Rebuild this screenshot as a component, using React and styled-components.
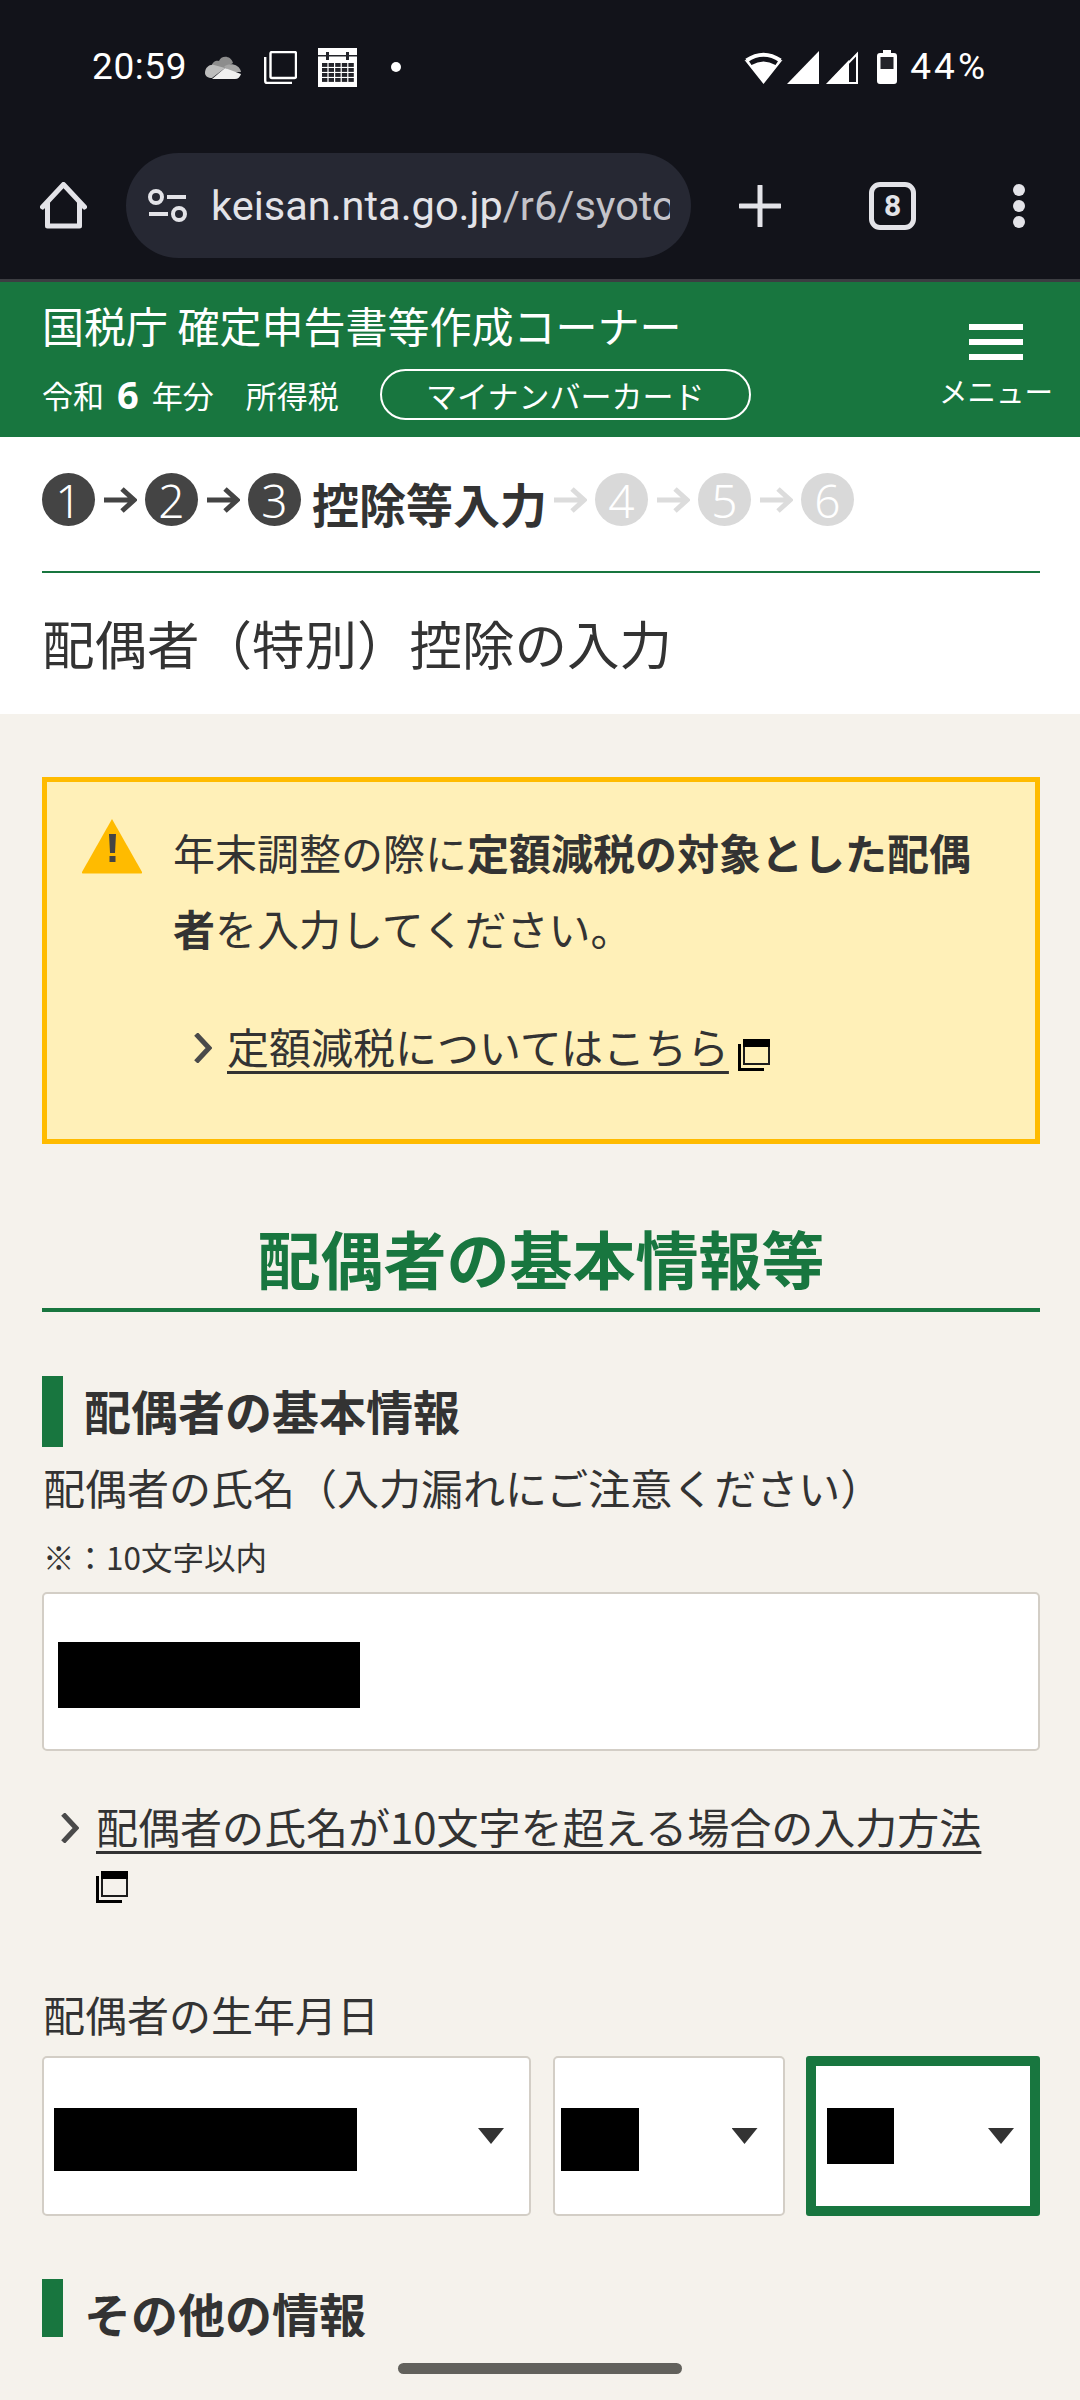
import styled, { createGlobalStyle } from "styled-components"

const GREEN = "#18763f"
const INK = "#333333"

const GlobalStyle = createGlobalStyle`
  html, body { margin: 0; padding: 0; }
  body {
    background: #f5f2ec;
    font-family: "Noto Sans CJK JP", "Noto Sans", sans-serif;
    color: ${INK};
  }
  * { box-sizing: border-box; }
`

const Screen = styled.div`
  width: 1080px;
  height: 2400px;
  display: flex;
  flex-direction: column;
  overflow: hidden;
  background: #f5f2ec;
`

/* browser chrome */
const Chrome = styled.div`
  background: #12131a;
  border-bottom: 3px solid #3c3d42;
  flex: none;
`

const StatusBar = styled.div`
  height: 134px;
  padding: 0 92px 0 92px;
  display: flex;
  align-items: center;
  justify-content: space-between;
  color: #fff;
  font-family: Roboto, sans-serif;
  font-size: 37px;
`

const StatusGroup = styled.div`
  display: flex;
  align-items: center;
`

const StatusText = styled.span`
  letter-spacing: ${(p) => p.$spacing || 0}px;
  line-height: 40px;
  margin-left: ${(p) => p.$left || 0}px;
`

const Glyph = styled.svg`
  display: block;
  flex: none;
  margin-left: ${(p) => p.$left || 0}px;
  margin-right: ${(p) => p.$right || 0}px;
  margin-top: ${(p) => p.$top || 0}px;
`

const Toolbar = styled.div`
  height: 145px;
  padding: 0 0 2px 40px;
  display: flex;
  align-items: center;
`

const UrlPill = styled.div`
  width: 565px;
  height: 105px;
  margin-left: 39px;
  padding-left: 22px;
  border-radius: 53px;
  background: #262833;
  display: flex;
  align-items: center;
`

const UrlText = styled.div`
  width: 459px;
  margin-left: 24px;
  overflow: hidden;
  white-space: nowrap;
  font-family: Roboto, sans-serif;
  font-size: 41.5px;
  line-height: 54px;
  color: #e3e3e8;
`

const UrlPath = styled.span`
  color: #c4c4ca;
`

const TabCount = styled.div`
  width: 47px;
  height: 48px;
  margin-left: 88px;
  border: 5px solid #e3e3e8;
  border-radius: 11px;
  display: flex;
  align-items: center;
  justify-content: center;
  color: #e3e3e8;
  font-family: Roboto, sans-serif;
  font-size: 30px;
  font-weight: 700;
  line-height: 1;
`

/* site header */
const SiteHeader = styled.header`
  height: 155px;
  flex: none;
  background: ${GREEN};
  color: #fff;
  display: flex;
  justify-content: space-between;
`

const HeaderLeft = styled.div`
  padding: 14px 0 0 42px;
`

const SiteTitle = styled.div`
  font-size: 42px;
  line-height: 58px;
  white-space: nowrap;
`

const SiteMeta = styled.div`
  margin-top: 15px;
  display: flex;
  align-items: center;
  font-size: 31px;
  line-height: 51px;
  white-space: nowrap;
`

const YearNumber = styled.b`
  font-family: "Noto Sans", sans-serif;
  font-size: 38px;
  margin: 0 13px;
  font-weight: 700;
`

const TaxName = styled.span`
  margin-left: 32px;
`

const CardPill = styled.div`
  width: 371px;
  height: 51px;
  margin-left: 41px;
  border: 2px solid #fff;
  border-radius: 26px;
  display: flex;
  align-items: center;
  justify-content: center;
  font-size: 31px;
  line-height: 1;
`

const MenuButton = styled.div`
  width: 112px;
  margin-right: 28px;
  padding-top: 42px;
  display: flex;
  flex-direction: column;
  align-items: center;
`

const MenuBar = styled.span`
  width: 54px;
  height: 6px;
  margin-bottom: 9px;
  background: #fff;
`

const MenuLabel = styled.span`
  margin-top: 2px;
  font-size: 28.5px;
  line-height: 40px;
  white-space: nowrap;
`

/* steps and page title */
const TitleBlock = styled.section`
  height: 277px;
  flex: none;
  background: #fff;
  padding: 36px 40px 0 42px;
`

const Steps = styled.div`
  height: 53px;
  display: flex;
  align-items: center;
`

const StepCircle = styled.span`
  width: 53px;
  height: 53px;
  border-radius: 50%;
  flex: none;
  background: ${(p) => (p.$done ? "#444444" : "#d9d9d9")};
  color: #fff;
  display: flex;
  align-items: center;
  justify-content: center;
  font-family: "Noto Sans", sans-serif;
  font-size: 46px;
  font-weight: 300;
  line-height: 1;
`

const StepName = styled.b`
  margin: 6px -2px 0 11px;
  font-size: 47px;
  line-height: 53px;
  font-weight: 700;
  white-space: nowrap;
`

const Divider = styled.div`
  height: 2px;
  margin-top: 45px;
  background: ${GREEN};
`

const PageTitle = styled.h1`
  margin: 38px 0 0 0;
  font-size: 52.5px;
  line-height: 62px;
  font-weight: 400;
  white-space: nowrap;
`

/* form */
const Main = styled.main`
  height: 1623px;
  flex: none;
  overflow: hidden;
  padding: 63px 40px 0 42px;
`

const Alert = styled.div`
  height: 367px;
  padding: 36px 0 0 34px;
  background: #fff0b8;
  border: 5px solid #ffbb00;
  display: flex;
  align-items: flex-start;
`

const AlertBody = styled.div`
  width: 805px;
  margin: -4px 0 0 30px;
`

const AlertText = styled.p`
  margin: 0;
  font-size: 42px;
  line-height: 76px;
`

const LinkRow = styled.div`
  display: flex;
  align-items: flex-start;
  margin: ${(p) => p.$margin};
`

const LinkText = styled.a`
  max-width: ${(p) => p.$max || 900}px;
  margin-left: ${(p) => p.$gap}px;
  color: ${INK};
  font-size: 42px;
  line-height: 60px;
  text-decoration: underline;
  text-decoration-thickness: 3px;
  text-underline-offset: 7px;
`

const LinkIcon = styled.svg`
  display: inline-block;
  vertical-align: ${(p) => p.$drop}px;
  margin-left: ${(p) => p.$left || 0}px;
`

const SectionTitle = styled.h2`
  margin: 72px 0 0 0;
  padding-bottom: 10px;
  border-bottom: 4px solid ${GREEN};
  color: ${GREEN};
  text-align: center;
  font-size: 63px;
  line-height: 82px;
  font-weight: 700;
`

const SubTitle = styled.h3`
  height: 71px;
  margin: ${(p) => p.$top}px 0 0 0;
  padding-left: 21px;
  border-left: 21px solid ${GREEN};
  font-size: 47px;
  line-height: 67px;
  font-weight: 700;
`

const FieldLabel = styled.div`
  margin-top: ${(p) => p.$top}px;
  padding-left: 1px;
  font-size: 42px;
  line-height: 60px;
  white-space: nowrap;
`

const Note = styled.div`
  margin-top: 17px;
  padding-left: 1px;
  font-size: 31.5px;
  line-height: 44px;
`

const TextField = styled.div`
  height: 159px;
  margin-top: 14px;
  padding-left: 14px;
  background: #fff;
  border: 2px solid #d3cec6;
  border-radius: 5px;
  display: flex;
  align-items: center;
`

const Redacted = styled.span`
  width: ${(p) => p.$w}px;
  height: ${(p) => p.$h}px;
  margin-top: ${(p) => p.$top}px;
  flex: none;
  background: #000;
`

const DateRow = styled.div`
  margin-top: 12px;
  display: grid;
  grid-template-columns: 489px 232px 234px;
  justify-content: space-between;
`

const Select = styled.div`
  height: 160px;
  padding: 0 ${(p) => (p.$focused ? 16 : 25)}px 0 ${(p) => p.$pad}px;
  background: #fff;
  border: ${(p) => (p.$focused ? `10px solid ${GREEN}` : "2px solid #d3cec6")};
  border-radius: ${(p) => (p.$focused ? 3 : 5)}px;
  display: flex;
  align-items: center;
  justify-content: space-between;
`

const SelectArrow = styled.span`
  width: 26px;
  height: 16px;
  background: ${INK};
  clip-path: polygon(0 0, 100% 0, 50% 100%);
`

/* android gesture bar */
const NavBar = styled.div`
  flex: 1;
  padding-top: 26px;
  display: flex;
  justify-content: center;
`

const HomeIndicator = styled.div`
  width: 284px;
  height: 11px;
  border-radius: 6px;
  background: #62615c;
`

const Chevron = ({ top = 0 }) => (
  <Glyph width="19" height="30" viewBox="0 0 19 30" $top={top}>
    <path d="M3 1 L16 15 L3 29" fill="none" stroke="#4a4a4a" strokeWidth="5" />
  </Glyph>
)

const WindowIcon = ({ left, drop = -7 }) => (
  <LinkIcon width="32" height="32" viewBox="0 0 32 32" $left={left} $drop={drop}>
    <rect x="6" y="1" width="25" height="24" fill="none" stroke="#1c1c1c" strokeWidth="2" />
    <rect x="5" y="0" width="27" height="8" fill="#000" />
    <path d="M1.5 5 V30.5 H26" fill="none" stroke="#000" strokeWidth="3" />
  </LinkIcon>
)

const StepArrow = ({ light }) => (
  <Glyph width="33" height="26" viewBox="0 0 33 26" $left={9} $right={8}>
    <path d="M0 13 H30 M18 2 L30 13 L18 24" fill="none" stroke={light ? "#dcdcdc" : "#444444"} strokeWidth="5" />
  </Glyph>
)

const CalendarIcon = () => (
  <Glyph width="39" height="39" viewBox="0 0 39 39" $left={21}>
    <rect width="39" height="39" fill="#fff" />
    <rect x="0" y="7" width="39" height="1.5" fill="#23242a" />
    <rect x="8" y="4" width="3" height="8" fill="#23242a" />
    <rect x="28" y="4" width="3" height="8" fill="#23242a" />
    {[0, 1, 2, 3].map((r) =>
      [0, 1, 2, 3, 4].map((c) => (
        <rect key={`${r}-${c}`} x={4 + c * 6.6} y={15 + r * 5} width="5.4" height="3.9" fill="#23242a" />
      ))
    )}
  </Glyph>
)

function App() {
  return (
    <Screen>
      <GlobalStyle />
      <Chrome>
        <StatusBar>
          <StatusGroup>
            <StatusText $spacing={0.6}>20:59</StatusText>
            <Glyph width="36" height="24" viewBox="0 0 36 24" $left={18}>
              <path d="M6 13 C7 6 12 5 14 6 C16 0 26 0 28 8 L18 14 Z" fill="#8d8d8d" />
              <path d="M0 18 C0 12 5 9 9 10 L20 13 L7 23 C3 23 0 21 0 18 Z" fill="#bdbdbd" />
              <path d="M19 12 C23 7 35 9 36 17 L26 17 Z" fill="#a5a5a5" />
              <path d="M7 24 L20 13 L36 19 C35 22 33 24 30 24 Z" fill="#f0f0f0" />
            </Glyph>
            <Glyph width="33" height="33" viewBox="0 0 33 33" $left={23}>
              <rect x="6.5" y="1" width="25.5" height="26" rx="1.5" fill="none" stroke="#fff" strokeWidth="2.4" />
              <path d="M1.2 6 V30 Q1.2 32 3 32 H28" fill="none" stroke="#fff" strokeWidth="2.4" />
            </Glyph>
            <CalendarIcon />
            <Glyph width="10" height="10" viewBox="0 0 10 10" $left={34}>
              <circle cx="5" cy="5" r="5" fill="#fff" />
            </Glyph>
          </StatusGroup>
          <StatusGroup>
            <Glyph width="39" height="33" viewBox="0 0 39 33">
              <path d="M2.5 9.5 Q19.5 -2 36.5 9.5" fill="none" stroke="#fff" strokeWidth="4" />
              <path d="M0.5 9 L19.5 33 L38.5 9 L34.5 9.5 L31.5 14 Q19.5 7 7.5 14 L4.5 9.5 Z" fill="#fff" />
            </Glyph>
            <Glyph width="32" height="33" viewBox="0 0 32 33" $left={4}>
              <path d="M32 0 V33 H0 Z" fill="#fff" />
            </Glyph>
            <Glyph width="32" height="33" viewBox="0 0 32 33" $left={7}>
              <path d="M31 3 V32 H3 Z" fill="none" stroke="#fff" strokeWidth="2" />
              <path d="M23 9 V33 H0 Z" fill="#fff" />
            </Glyph>
            <Glyph width="20" height="34" viewBox="0 0 20 34" $left={19}>
              <path d="M6 0 H14 V3 H17 Q20 3 20 6 V31 Q20 34 17 34 H3 Q0 34 0 31 V6 Q0 3 3 3 H6 Z" fill="#fff" />
              <rect x="3.5" y="7" width="13" height="12" fill="#23242a" />
            </Glyph>
            <StatusText $spacing={3} $left={13}>44%</StatusText>
          </StatusGroup>
        </StatusBar>
        <Toolbar>
          <Glyph width="47" height="47" viewBox="0 0 47 47">
            <path d="M2.5 25 L23.5 2.5 L44.5 25" fill="none" stroke="#e3e3e8" strokeWidth="5" strokeLinecap="round" strokeLinejoin="round" />
            <path d="M7.5 20 V44 H39.5 V20" fill="none" stroke="#e3e3e8" strokeWidth="5" strokeLinejoin="round" />
          </Glyph>
          <UrlPill>
            <Glyph width="39" height="33" viewBox="0 0 39 33">
              <circle cx="8" cy="8" r="6" fill="none" stroke="#e3e3e8" strokeWidth="4" />
              <circle cx="31" cy="25" r="6" fill="none" stroke="#e3e3e8" strokeWidth="4" />
              <path d="M19 8 H38 M1 25 H20" stroke="#e3e3e8" strokeWidth="4" />
            </Glyph>
            <UrlText>keisan.nta.go.jp<UrlPath>/r6/syotoku</UrlPath></UrlText>
          </UrlPill>
          <Glyph width="42" height="42" viewBox="0 0 42 42" $left={48}>
            <path d="M21 1 V41 M1 21 H41" stroke="#e3e3e8" strokeWidth="5" strokeLinecap="round" />
          </Glyph>
          <TabCount>8</TabCount>
          <Glyph width="14" height="46" viewBox="0 0 14 46" $left={96}>
            <circle cx="7" cy="7" r="6" fill="#e3e3e8" />
            <circle cx="7" cy="23" r="6" fill="#e3e3e8" />
            <circle cx="7" cy="39" r="6" fill="#e3e3e8" />
          </Glyph>
        </Toolbar>
      </Chrome>

      <SiteHeader>
        <HeaderLeft>
          <SiteTitle>国税庁 確定申告書等作成コーナー</SiteTitle>
          <SiteMeta>
            令和<YearNumber>6</YearNumber>年分
            <TaxName>所得税</TaxName>
            <CardPill>マイナンバーカード</CardPill>
          </SiteMeta>
        </HeaderLeft>
        <MenuButton>
          <MenuBar />
          <MenuBar />
          <MenuBar />
          <MenuLabel>メニュー</MenuLabel>
        </MenuButton>
      </SiteHeader>

      <TitleBlock>
        <Steps>
          <StepCircle $done>1</StepCircle>
          <StepArrow />
          <StepCircle $done>2</StepCircle>
          <StepArrow />
          <StepCircle $done>3</StepCircle>
          <StepName>控除等入力</StepName>
          <StepArrow light />
          <StepCircle>4</StepCircle>
          <StepArrow light />
          <StepCircle>5</StepCircle>
          <StepArrow light />
          <StepCircle>6</StepCircle>
        </Steps>
        <Divider />
        <PageTitle>配偶者（特別）控除の入力</PageTitle>
      </TitleBlock>

      <Main>
        <Alert>
          <Glyph width="62" height="56" viewBox="0 0 62 56">
            <path d="M31 1 L61 54 Q61.5 55.5 60 55.5 H2 Q0.5 55.5 1 54 Z" fill="#ffbb00" />
            <path d="M28 16 H35 L34 35 H29 Z M28.5 38 H34.5 V44 H28.5 Z" fill="#444444" />
          </Glyph>
          <AlertBody>
            <AlertText>
              年末調整の際に<b>定額減税の対象とした配偶者</b>を入力してください。
            </AlertText>
            <LinkRow $margin="50px 0 0 20px">
              <Chevron top={17} />
              <LinkText $gap={15}>定額減税についてはこちら<WindowIcon left={9} /></LinkText>
            </LinkRow>
          </AlertBody>
        </Alert>

        <SectionTitle>配偶者の基本情報等</SectionTitle>

        <SubTitle $top={64}>配偶者の基本情報</SubTitle>
        <FieldLabel $top={10}>配偶者の氏名（入力漏れにご注意ください）</FieldLabel>
        <Note>※：10文字以内</Note>
        <TextField>
          <Redacted $w={302} $h={66} $top={7} />
        </TextField>

        <LinkRow $margin="45px 0 0 18px">
          <Chevron top={17} />
          <LinkText $gap={17} $max={910}>配偶者の氏名が10文字を超える場合の入力方法<WindowIcon drop={1} /></LinkText>
        </LinkRow>

        <FieldLabel $top={68}>配偶者の生年月日</FieldLabel>
        <DateRow>
          <Select $pad={10}>
            <Redacted $w={303} $h={63} $top={7} />
            <SelectArrow />
          </Select>
          <Select $pad={6}>
            <Redacted $w={78} $h={63} $top={7} />
            <SelectArrow />
          </Select>
          <Select $focused $pad={11}>
            <Redacted $w={67} $h={56} $top={0} />
            <SelectArrow />
          </Select>
        </DateRow>

        <SubTitle $top={63}>その他の情報</SubTitle>
      </Main>

      <NavBar>
        <HomeIndicator />
      </NavBar>
    </Screen>
  )
}

export default App
